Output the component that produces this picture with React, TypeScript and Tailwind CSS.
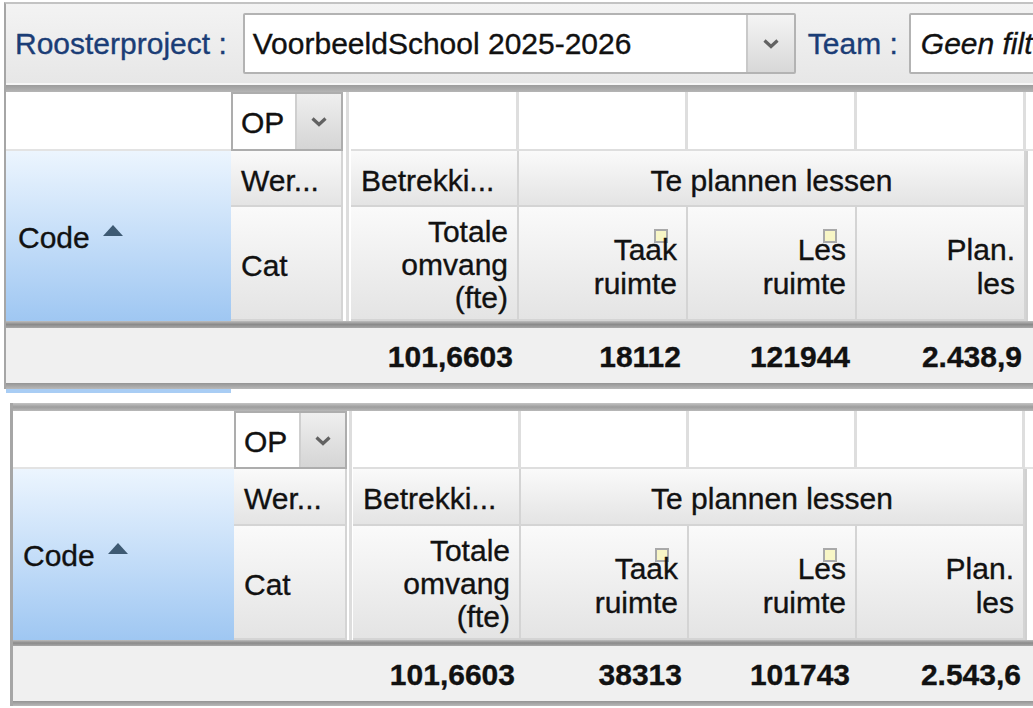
import React from "react";

const Chevron = () => (
  <svg width="18" height="11" viewBox="0 0 18 11">
    <path d="M2.5 2.5 L9 8.5 L15.5 2.5" fill="none" stroke="#626262" strokeWidth="3.2" />
  </svg>
);

const SortUp = () => (
  <svg width="20" height="11" viewBox="0 0 20 11" className="ml-[13px] mb-[14px]">
    <polygon points="0,11 10,0 20,11" fill="#3e5a73" />
  </svg>
);

const Note = () => (
  <div className="absolute right-[18px] top-[22px] w-[14px] h-[14px] bg-[#f8f6c6] border-2 border-[#a9a9a9]" />
);

const hdr =
  "bg-linear-to-b from-[#fafafa] to-[#e4e4e4] border-r-2 border-b-2 border-[#d4d4d4]";

type GridProps = {
  cols: string;
  rows: string;
  vals: string[];
  codePad: string;
  thick: string;
  bottom: string;
};

function Grid({ cols, rows, vals, codePad, thick, bottom }: GridProps) {
  return (
    <>
      <div className={`grid ${cols} ${rows}`}>
        {/* row 1 */}
        <div className="col-start-1 row-start-1 bg-white border-b-2 border-[#e3e3e3]" />
        <div className="col-start-2 row-start-1 flex border-2 border-[#adadad] bg-white">
          <div className="flex-1 flex items-center pl-[8px] pt-[2px]">OP</div>
          <div className="w-[46px] border-l-2 border-[#cfcfcf] bg-linear-to-b from-[#efefef] to-[#d5d5d5] flex items-center justify-center">
            <Chevron />
          </div>
        </div>
        <div className="col-start-3 row-start-1 row-span-3 bg-white flex justify-center">
          <div className="w-[3px] bg-[#dddddd]" />
        </div>
        <div className="col-start-4 row-start-1 bg-white border-r-[3px] border-b-2 border-[#dedede]" />
        <div className="col-start-5 row-start-1 bg-white border-r-[3px] border-b-2 border-[#dedede]" />
        <div className="col-start-6 row-start-1 bg-white border-r-[3px] border-b-2 border-[#dedede]" />
        <div className="col-start-7 row-start-1 bg-white border-r-[3px] border-b-2 border-[#dedede]" />
        <div className="col-start-8 row-start-1 bg-white border-b-2 border-[#e3e3e3]" />

        {/* code header */}
        <div
          className={`col-start-1 row-start-2 row-span-2 flex items-center ${codePad} pt-[2px] bg-linear-to-b from-[#ecf5fe] to-[#9fc7f2]`}
        >
          <span>Code</span>
          <SortUp />
        </div>

        {/* row 2 */}
        <div className={`col-start-2 row-start-2 flex items-center pl-[10px] pt-[4px] ${hdr}`}>Wer...</div>
        <div className={`col-start-4 row-start-2 flex items-center pl-[10px] pt-[4px] ${hdr}`}>Betrekki...</div>
        <div className={`col-start-5 col-span-3 row-start-2 flex items-center justify-center pt-[4px] ${hdr}`}>
          Te plannen lessen
        </div>
        <div className="col-start-8 row-start-2 row-span-2 bg-white border-l-2 border-[#d0d0d0]" />

        {/* row 3 */}
        <div className={`col-start-2 row-start-3 flex items-center pl-[10px] pt-[4px] ${hdr}`}>Cat</div>
        <div className={`col-start-4 row-start-3 flex flex-col justify-center items-end text-right pr-[9px] pt-[3px] leading-[33px] ${hdr}`}>
          <span>Totale</span>
          <span>omvang</span>
          <span>(fte)</span>
        </div>
        <div className={`relative col-start-5 row-start-3 flex flex-col justify-center items-end text-right pr-[9px] pt-[8px] leading-[34px] ${hdr}`}>
          <Note />
          <span className="relative">Taak</span>
          <span>ruimte</span>
        </div>
        <div className={`relative col-start-6 row-start-3 flex flex-col justify-center items-end text-right pr-[9px] pt-[8px] leading-[34px] ${hdr}`}>
          <Note />
          <span className="relative">Les</span>
          <span>ruimte</span>
        </div>
        <div className={`col-start-7 row-start-3 flex flex-col justify-center items-end text-right pr-[9px] pt-[8px] leading-[34px] ${hdr}`}>
          <span>Plan.</span>
          <span>les</span>
        </div>
      </div>

      <div className={`${thick} bg-linear-to-b from-[#bdbdbd] via-[#8a8a8a] to-[#a8a8a8]`} />
      <div className={`grid ${cols} h-[55px] bg-[#f0f0f0] font-bold`}>
        <div className="col-start-4 flex items-center justify-end pr-[6px] pt-[2px]">{vals[0]}</div>
        <div className="col-start-5 flex items-center justify-end pr-[7px] pt-[2px]">{vals[1]}</div>
        <div className="col-start-6 flex items-center justify-end pr-[7px] pt-[2px]">{vals[2]}</div>
        <div className="col-start-7 flex items-center justify-end pr-[4px] pt-[2px]">{vals[3]}</div>
      </div>
      <div className={`${bottom} bg-linear-to-b from-[#949494] to-[#b9b9b9]`} />
    </>
  );
}

export default function App() {
  return (
    <div className="w-[1033px] h-[708px] overflow-hidden bg-white text-[30px] text-[#111] [-webkit-text-stroke:0.35px] font-['Liberation_Sans',Arial,sans-serif]">
      {/* Panel 1 */}
      <div className="mt-[2px] ml-[4px] border-t-2 border-l-2 border-[#a6a6a6] border-t-[#c3c3c3]">
        <div className="h-[81px] flex items-center bg-linear-to-b from-[#f3f3f3] to-[#e7e7e7] border-b-2 border-[#f6f6f6] whitespace-nowrap">
          <span className="ml-[9px] text-[#1b3d76]">Roosterproject :</span>
          <div className="ml-[16px] w-[553px] h-[61px] shrink-0 flex border-2 border-[#b3b3b3] rounded-[2px] bg-white">
            <div className="flex-1 flex items-center pl-[8px]">VoorbeeldSchool 2025-2026</div>
            <div className="w-[48px] border-l-2 border-[#c9c9c9] bg-linear-to-b from-[#f4f4f4] to-[#d8d8d8] flex items-center justify-center">
              <Chevron />
            </div>
          </div>
          <span className="ml-[12px] text-[#1b3d76]">Team :</span>
          <div className="ml-[11px] w-[300px] h-[61px] shrink-0 flex items-center border-2 border-[#b3b3b3] rounded-[2px] bg-white pl-[10px] italic">
            Geen filter
          </div>
        </div>
        <div className="h-[7px] bg-linear-to-b from-[#9c9c9c] to-[#b5b5b5]" />
        <Grid
          cols="grid-cols-[225px_112px_8px_168px_169px_169px_169px_1fr]"
          rows="grid-rows-[59px_56px_114px]"
          vals={["101,6603", "18112", "121944", "2.438,9"]}
          codePad="pl-[12px]"
          thick="h-[7px]"
          bottom="h-[6px]"
        />
      </div>
      <div className="ml-[6px] w-[225px] h-[4px] bg-[#a9cdf4]" />

      {/* Panel 2 */}
      <div className="mt-[10px] ml-[10px] border-l-[3px] border-[#a6a6a6]">
        <div className="h-[8px] bg-linear-to-b from-[#c4c4c4] via-[#9d9d9d] to-[#b9b9b9]" />
        <Grid
          cols="grid-cols-[221px_113px_6px_168px_168px_168px_168px_1fr]"
          rows="grid-rows-[58px_57px_114px]"
          vals={["101,6603", "38313", "101743", "2.543,6"]}
          codePad="pl-[10px]"
          thick="h-[6px]"
          bottom="h-[5px]"
        />
      </div>
    </div>
  );
}
